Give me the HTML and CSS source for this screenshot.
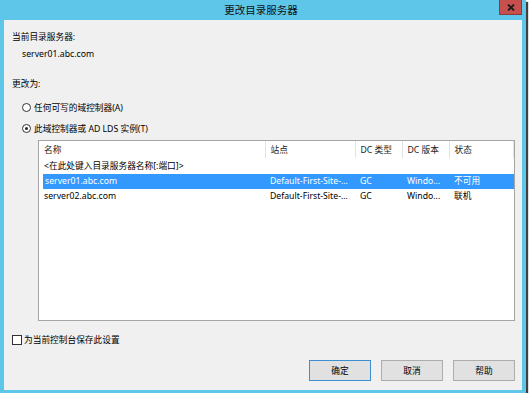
FILE: index.html
```html
<!DOCTYPE html>
<html lang="zh-CN">
<head>
    <meta charset="UTF-8">
    <title>更改目录服务器</title>
    <link rel="stylesheet" href="styles.css">
</head>
<body>

    <div class="window">
        <div class="titlebar">
            <span></span>
            <h1 class="title">更改目录服务器</h1>
            <button class="close" title="关闭">
                <svg width="8" height="7" viewBox="0 0 8 7">
                    <path d="M1 0.5 L7 6.5 M7 0.5 L1 6.5" stroke="#1b1b1b" stroke-width="1.8"/>
                </svg>
            </button>
        </div>

        <div class="client">
            <p class="label">当前目录服务器:</p>
            <p class="current">server01.abc.com</p>

            <p class="label change">更改为:</p>
            <div class="option first"><span class="radio"></span>任何可写的域控制器(A)</div>
            <div class="option"><span class="radio checked"></span>此域控制器或 AD LDS 实例(T)</div>

            <!-- server list -->
            <div class="list">
                <table>
                    <colgroup>
                        <col style="width: 226px">
                        <col style="width: 90px">
                        <col style="width: 47px">
                        <col style="width: 47px">
                        <col>
                    </colgroup>
                    <thead>
                        <tr>
                            <th>名称</th>
                            <th>站点</th>
                            <th>DC 类型</th>
                            <th>DC 版本</th>
                            <th>状态</th>
                        </tr>
                    </thead>
                    <tbody>
                        <tr>
                            <td>&lt;在此处键入目录服务器名称[:端口]&gt;</td>
                            <td></td><td></td><td></td><td></td>
                        </tr>
                        <tr class="selected">
                            <td>server01.abc.com</td>
                            <td>Default-First-Site-...</td>
                            <td>GC</td>
                            <td>Windo...</td>
                            <td>不可用</td>
                        </tr>
                        <tr>
                            <td>server02.abc.com</td>
                            <td>Default-First-Site-...</td>
                            <td>GC</td>
                            <td>Windo...</td>
                            <td>联机</td>
                        </tr>
                    </tbody>
                </table>
            </div>

            <div class="save"><span class="checkbox"></span>为当前控制台保存此设置</div>

            <div class="actions">
                <button class="btn default">确定</button>
                <button class="btn">取消</button>
                <button class="btn">帮助</button>
            </div>
        </div>
    </div>

</body>
</html>
```

FILE: styles.css
```css
body {
    margin: 0;
    background-color: #fff;
    font-family: "Noto Sans", "Noto Sans CJK SC", sans-serif;
    font-size: 8.7px;
    color: #000;
}
.window {
    width: 526px;
    height: 393px;
    background-color: #5ec6e9;
    box-shadow: 2px 2px 1px rgba(0, 0, 0, 0.75);
    display: flex;
    flex-direction: column;
}
.titlebar {
    height: 20px;
    display: grid;
    grid-template-columns: 1fr auto 1fr;
    padding-right: 4px;
}
.title {
    margin: 0;
    font-size: 10.5px;
    font-weight: normal;
    line-height: 20px;
    color: #111;
}
.close {
    justify-self: end;
    width: 23px;
    height: 15px;
    padding: 0;
    border: 1px solid #8a3a38;
    border-top: none;
    background-color: #c7504c;
    display: flex;
    align-items: center;
    justify-content: center;
}
.client {
    flex: 1;
    margin: 0 4px 3px 4px;
    background-color: #f0f0f0;
    padding: 10px 7px 0 8px;
    display: flex;
    flex-direction: column;
}
p {
    margin: 0;
    line-height: 15px;
}
.current {
    margin-top: 2px;
    padding-left: 10px;
}
.change {
    margin-top: 15px;
}
.option {
    display: flex;
    align-items: center;
    height: 15px;
    margin-top: 6px;
    padding-left: 10px;
}
.option.first {
    margin-top: 8px;
}
.radio {
    width: 7px;
    height: 7px;
    border: 1px solid #333;
    border-radius: 50%;
    background-color: #fff;
    margin-right: 3px;
    display: flex;
    align-items: center;
    justify-content: center;
}
.radio.checked::after {
    content: "";
    width: 3px;
    height: 3px;
    border-radius: 50%;
    background-color: #222;
}
.list {
    margin: 4px 0 0 26px;
    height: 179px;
    border: 1px solid #a5a5a5;
    background-color: #fff;
}
table {
    width: 100%;
    border-collapse: collapse;
    table-layout: fixed;
}
th {
    height: 17px;
    padding: 0 0 0 5px;
    font-weight: normal;
    text-align: left;
    color: #222;
    border-right: 1px solid #e3e3e3;
    white-space: nowrap;
}
td {
    height: 15px;
    padding: 0 0 0 5px;
    white-space: nowrap;
    overflow: hidden;
    line-height: 15px;
}
tbody tr:first-child td {
    padding-top: 1px;
}
.selected td {
    background-color: #3399ff;
    color: #fff;
}
/* full-row highlight leaves a small gutter on the left */
.selected td:first-child {
    padding-left: 6px;
    background: linear-gradient(to right, #fff 4px, #3399ff 4px);
}
.save {
    display: flex;
    align-items: center;
    height: 15px;
    margin-top: 11px;
}
.checkbox {
    width: 8px;
    height: 8px;
    border: 1px solid #333;
    background-color: #fff;
    margin-right: 2px;
}
.actions {
    display: flex;
    justify-content: flex-end;
    gap: 10px;
    margin-top: 13px;
}
.btn {
    width: 62px;
    height: 21px;
    padding: 0;
    border: 1px solid #adadad;
    background-color: #e1e1e1;
    font-family: inherit;
    font-size: 8.7px;
    color: #000;
}
.btn.default {
    border-color: #3c8ed0;
}
```
